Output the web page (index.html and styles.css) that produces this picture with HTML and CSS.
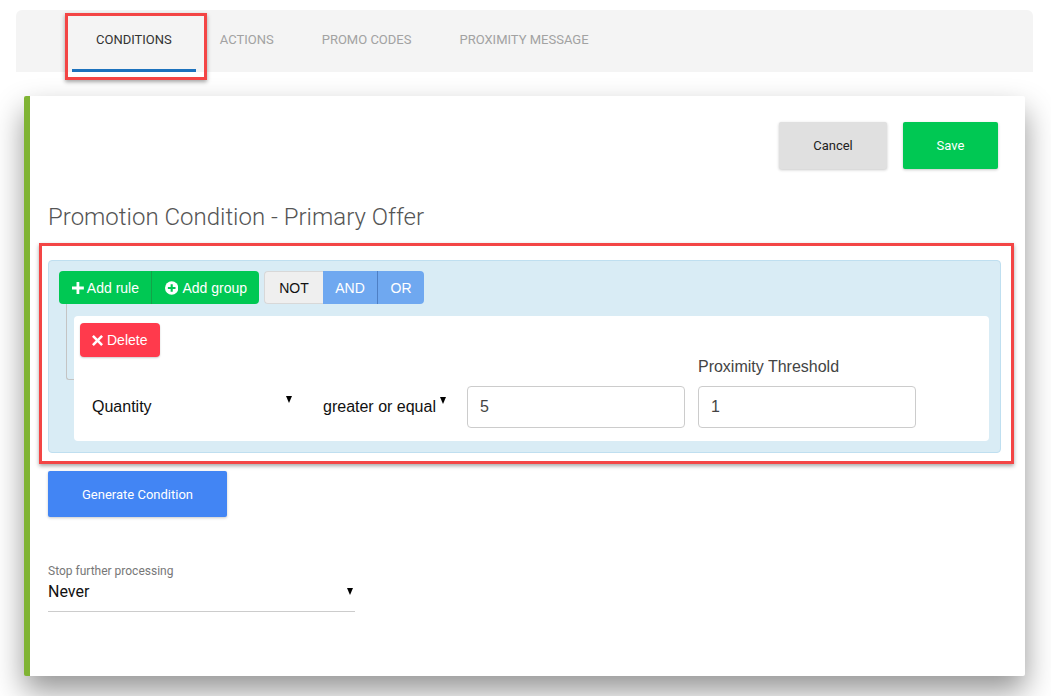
FILE: index.html
```html
<!DOCTYPE html>
<html>
<head>
<meta charset="utf-8">
<link rel="stylesheet" href="styles.css">
</head>
<body>
<nav class="tabbar">
  <div class="tab active">Conditions<span class="mark"></span></div>
  <div class="tab">Actions</div>
  <div class="tab">Promo Codes</div>
  <div class="tab">Proximity Message</div>
</nav>

<section class="card">
  <div class="actions">
    <button class="btn btn-cancel">Cancel</button>
    <button class="btn btn-save">Save</button>
  </div>

  <h1 class="title">Promotion Condition - Primary Offer</h1>

  <div class="highlight">
    <div class="group">
      <div class="group-header">
        <div class="btn-group">
          <button class="qb qb-green">
            <svg width="12" height="12" viewBox="0 0 12 12"><path d="M4.6 0h2.8v4.6H12v2.8H7.4V12H4.6V7.4H0V4.6h4.6z" fill="#fff"/></svg>
            Add rule
          </button>
          <button class="qb qb-green qb-sep">
            <svg width="14" height="14" viewBox="0 0 14 14"><circle cx="7" cy="7" r="7" fill="#fff"/><path d="M5.9 3h2.2v2.9H11v2.2H8.1V11H5.9V8.1H3V5.9h2.9z" fill="#00c853"/></svg>
            Add group
          </button>
        </div>
        <div class="btn-group logic">
          <button class="qb qb-not">NOT</button>
          <button class="qb qb-blue">AND</button>
          <button class="qb qb-blue qb-bsep">OR</button>
        </div>
      </div>

      <div class="rules">
        <div class="rule">
          <button class="qb qb-red">
            <svg width="11" height="11" viewBox="0 0 11 11"><path d="M1.8 0L5.5 3.7 9.2 0 11 1.8 7.3 5.5 11 9.2 9.2 11 5.5 7.3 1.8 11 0 9.2 3.7 5.5 0 1.8z" fill="#fff"/></svg>
            Delete
          </button>
          <div class="rule-row">
            <div class="sel sel-field"><span>Quantity</span><i class="caret"></i></div>
            <div class="sel sel-op"><span>greater or equal</span><i class="caret"></i></div>
            <div class="inp inp-value">5</div>
            <div class="field">
              <label class="field-label">Proximity Threshold</label>
              <div class="inp">1</div>
            </div>
          </div>
        </div>
      </div>
    </div>
  </div>

  <button class="btn btn-generate">Generate Condition</button>

  <div class="stop">
    <div class="stop-label">Stop further processing</div>
    <div class="stop-select"><span>Never</span><i class="caret caret-stop"></i></div>
  </div>
</section>
</body>
</html>
```

FILE: styles.css
```css
* { box-sizing: border-box; }

html, body { margin: 0; background: #fff; }

body {
  padding-top: 10px;
  font-family: Roboto, "Liberation Sans", sans-serif;
  width: 1051px;
  height: 696px;
  overflow: hidden;
}

/* Tabs */
.tabbar {
  margin: 0 18px 0 16px;
  height: 62px;
  background: #f4f4f4;
  border-radius: 6px 6px 0 0;
  display: flex;
  padding-left: 56px;
}

.tab {
  position: relative;
  height: 62px;
  line-height: 59px;
  padding: 0 24px;
  font-size: 13px;
  text-transform: uppercase;
  color: #a2a2a2;
  border-bottom: 3px solid transparent;
}

.tab.active {
  color: #333;
  border-bottom-color: #1c72bd;
}

.tab .mark {
  position: absolute;
  left: -7px;
  right: -11px;
  top: 3px;
  height: 67px;
  border: 3px solid #f34545;
  box-shadow: 0 2px 4px rgba(0, 0, 0, 0.35);
}

/* Card */
.card {
  margin: 24px 26px 0 24px;
  height: 580px;
  background: #fff;
  border-left: 6px solid #80b434;
  padding: 26px 27px 0 18px;
  box-shadow: 0 15px 30px rgba(0, 0, 0, 0.42);
  border-radius: 2px;
}

.actions {
  display: flex;
  justify-content: flex-end;
  gap: 16px;
}

.btn {
  border: 0;
  border-radius: 2px;
  font-family: Roboto, "Liberation Sans", sans-serif;
  font-size: 13px;
  height: 47px;
  box-shadow: 0 1px 3px rgba(0, 0, 0, 0.22);
  cursor: pointer;
}

.btn-cancel { width: 108px; background: #e0e0e0; color: #222; }
.btn-save { width: 95px; background: #00c853; color: #fff; }

.title {
  margin: 34px 0 12px 0;
  font-size: 24px;
  font-weight: 300;
  color: #555;
  line-height: 28px;
}

/* Annotation box */
.highlight {
  margin: 0 -16px 0 -9px;
  border: 3px solid #f34545;
  padding: 14px 10px 8px 6px;
  box-shadow: 0 2px 4px rgba(0, 0, 0, 0.35);
}

/* Query builder group */
.group {
  background: #d9ecf5;
  border: 1px solid #bfdff0;
  border-radius: 4px;
  padding: 10px 11px 11px 10px;
}

.group-header {
  display: flex;
  gap: 5px;
}

.btn-group { display: flex; }

.qb {
  border: 0;
  font-family: "Liberation Sans", Arial, sans-serif;
  font-size: 14px;
  height: 33px;
  padding: 0 12px;
  display: flex;
  align-items: center;
  gap: 3px;
  color: #fff;
  white-space: nowrap;
  cursor: pointer;
}

.qb-green { background: #00c853; }
.btn-group .qb:first-child { border-radius: 4px 0 0 4px; }
.btn-group .qb:last-child { border-radius: 0 4px 4px 0; }

.qb-green:first-child { width: 92px; padding-left: 13px; }
.qb-sep { width: 108px; border-left: 1px solid #13a348; padding-left: 13px; gap: 4px; }

.qb-not { width: 59px; background: #efefef; color: #111; justify-content: center; border: 1px solid #d8d8d8; border-right: 0; }
.qb-blue { background: #6fa8f0; width: 54px; justify-content: center; }
.qb-bsep { width: 47px; border-left: 1px solid #4e7fc4; }

.rules {
  position: relative;
  margin: 12px 0 0 15px;
}

.rules::before {
  content: "";
  position: absolute;
  left: -8px;
  top: -12px;
  width: 8px;
  height: 75px;
  border-left: 1px solid #c4c4c4;
  border-bottom: 1px solid #c4c4c4;
  border-bottom-left-radius: 3px;
}

.rule {
  position: relative;
  background: #fff;
  border-radius: 4px;
  padding: 7px 6px 13px 6px;
}

.qb-red {
  background: #ff3a4c;
  width: 80px;
  height: 34px;
  border-radius: 4px;
  padding-left: 12px;
  gap: 4px;
  box-shadow: 0 1px 2px rgba(0, 0, 0, 0.2);
}

.rule-row {
  display: flex;
  align-items: flex-end;
  margin-top: 0;
}

.sel {
  height: 42px;
  display: flex;
  align-items: center;
  font-family: "Liberation Sans", Arial, sans-serif;
  font-size: 16px;
  color: #111;
}

.caret {
  display: block;
  width: 0;
  height: 0;
  border-left: 3.5px solid transparent;
  border-right: 3.5px solid transparent;
  border-top: 7px solid #000;
  align-self: flex-start;
  margin-top: 10px;
}

.sel-field {
  width: 218px;
  padding-left: 12px;
  justify-content: space-between;
  padding-right: 6px;
}

.sel-op {
  margin-left: 25px;
  gap: 4px;
}

.sel-op .caret { margin-top: 11px; }

.inp {
  width: 218px;
  height: 42px;
  border: 1px solid #ccc;
  border-radius: 4px;
  font-family: "Liberation Sans", Arial, sans-serif;
  font-size: 16px;
  color: #444;
  display: flex;
  align-items: center;
  padding-left: 12px;
}

.inp-value { margin-left: 21px; }

.field { margin-left: 13px; }

.field-label {
  display: block;
  font-family: "Liberation Sans", Arial, sans-serif;
  font-size: 16px;
  color: #444;
  line-height: 20px;
  margin-bottom: 9px;
}

/* Generate */
.btn-generate {
  margin-top: 7px;
  display: block;
  width: 179px;
  height: 46px;
  background: #4285f4;
  color: #fff;
}

.stop {
  margin-top: 47px;
  width: 307px;
}

.stop-label {
  font-size: 12px;
  color: #777;
  line-height: 14px;
}

.stop-select {
  display: flex;
  justify-content: space-between;
  align-items: center;
  font-size: 16px;
  color: #111;
  height: 26px;
  border-bottom: 1px solid #ccc;
  padding-bottom: 7px;
  padding-right: 2px;
  box-sizing: content-box;
}

.caret-stop {
  align-self: center;
  margin-top: 0;
}
```
